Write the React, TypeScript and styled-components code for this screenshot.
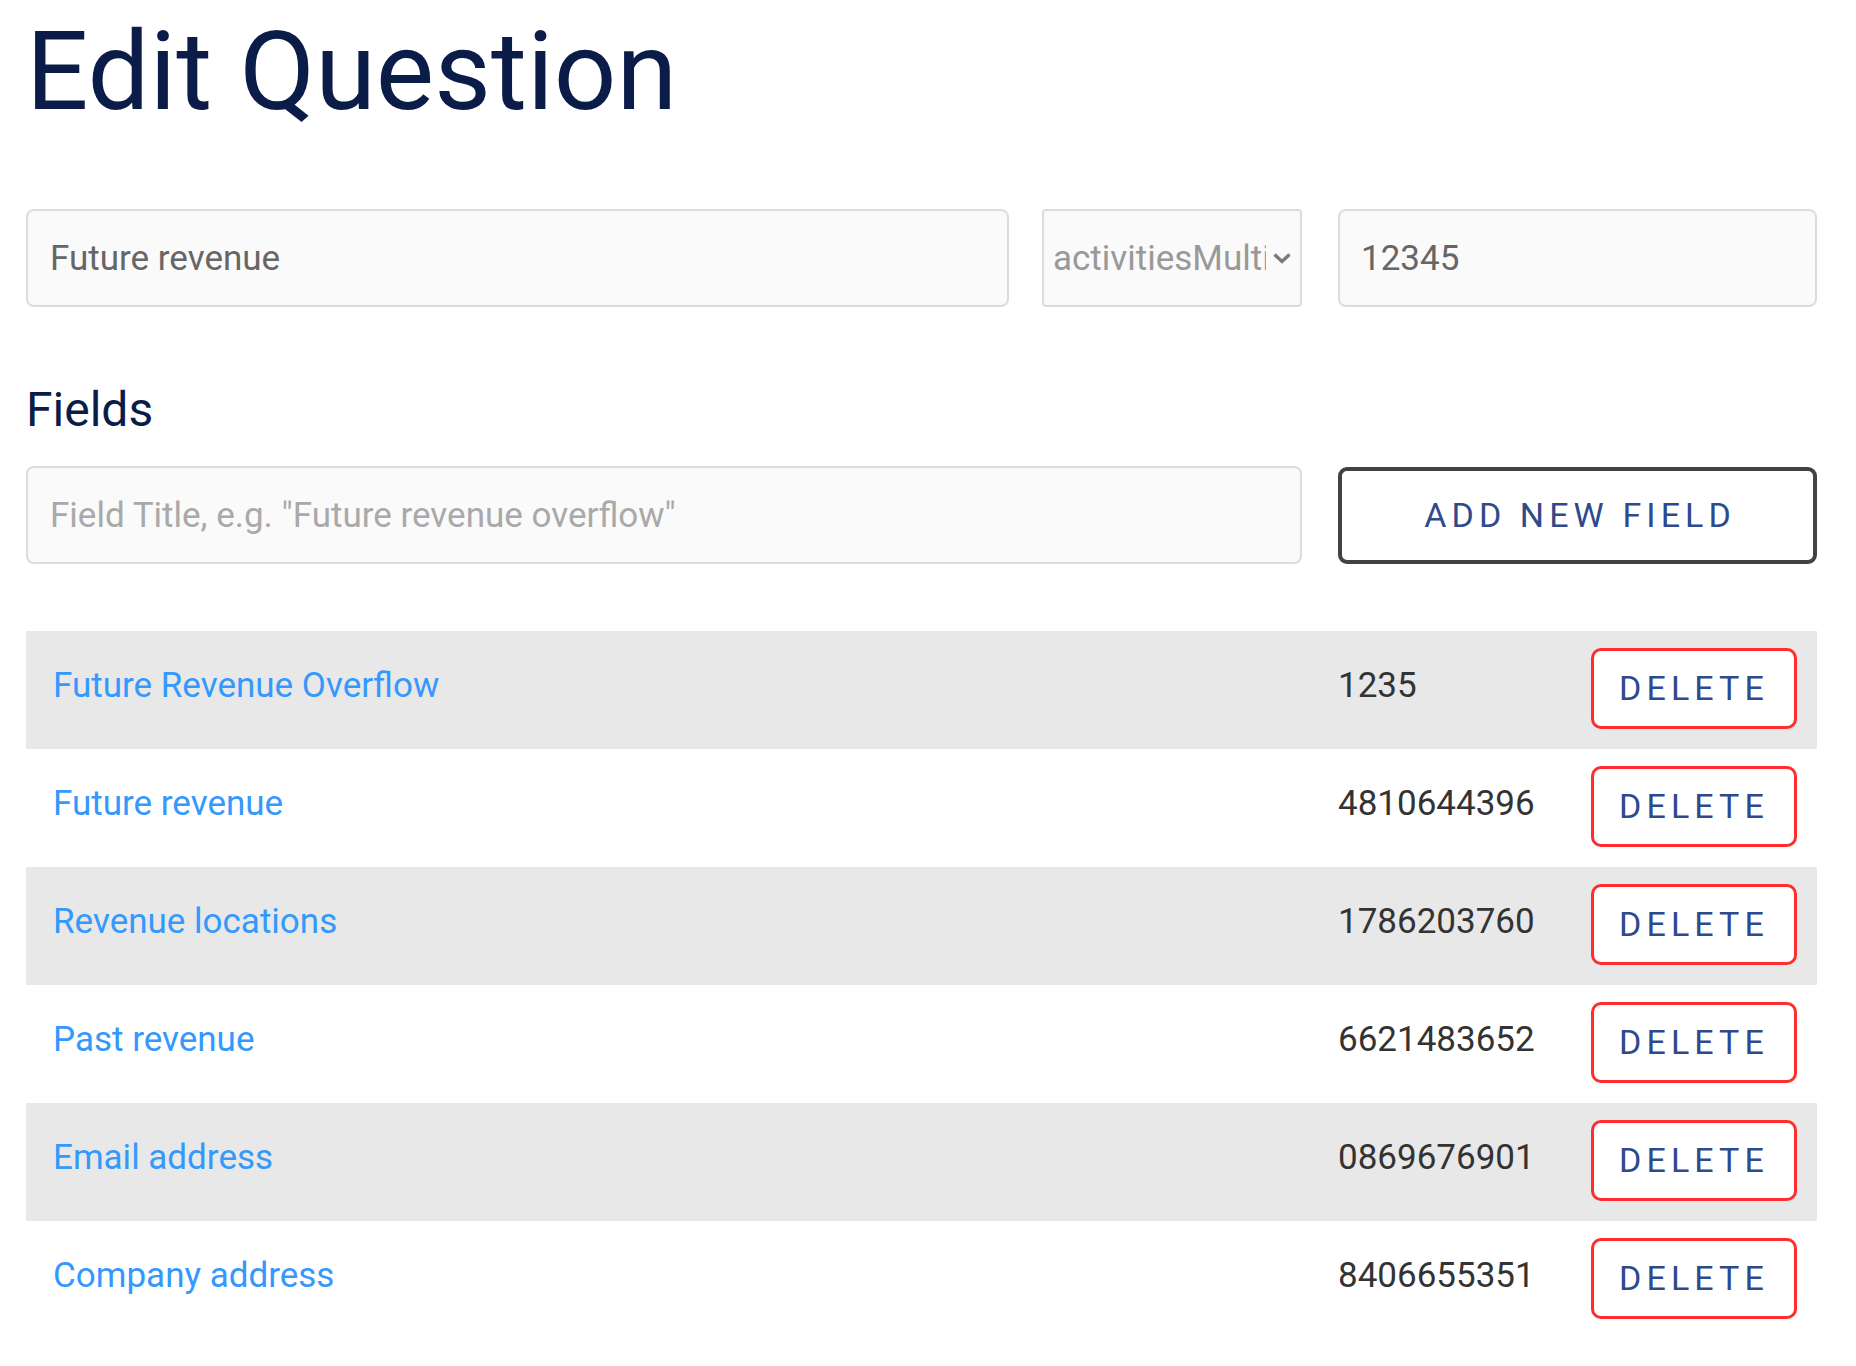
import React from 'react';
import styled, { createGlobalStyle } from 'styled-components';

const GlobalStyle = createGlobalStyle`
  body {
    margin: 0;
    background: #ffffff;
    font-family: Roboto, "Liberation Sans", sans-serif;
  }
  * {
    box-sizing: border-box;
  }
`;

const Page = styled.div`
  padding: 17px 39px 40px 26px;
`;

const Title = styled.h1`
  margin: 0;
  font-size: 110px;
  line-height: 1;
  font-weight: 400;
  color: #0b1c48;
`;

const QuestionRow = styled.div`
  display: flex;
  margin-top: 82px;
`;

const TextInput = styled.input`
  flex: 1;
  width: 100%;
  min-width: 0;
  height: 98px;
  padding: 0 22px;
  border: 2px solid #dcdcdc;
  border-radius: 8px;
  background: #fafafa;
  font-family: inherit;
  font-size: 35px;
  color: #666;
  outline: none;

  &::placeholder {
    color: #a9a9a9;
  }
`;

const IdInput = styled(TextInput)`
  flex: 0 0 479px;
  padding: 0 21px;
`;

const SelectWrap = styled.div`
  position: relative;
  flex: 0 0 260px;
  margin: 0 36px 0 33px;
`;

const Select = styled.select`
  width: 100%;
  height: 98px;
  padding: 0 34px 0 9px;
  border: 2px solid #dcdcdc;
  border-radius: 4px;
  background: #fafafa;
  font-family: inherit;
  font-size: 35px;
  color: #999;
  appearance: none;
  outline: none;
`;

const Chevron = styled.svg`
  position: absolute;
  right: 10px;
  top: 50%;
  width: 20px;
  height: 12px;
  transform: translateY(-50%);
  pointer-events: none;
`;

const SectionTitle = styled.h2`
  margin: 79px 0 0;
  font-size: 48px;
  line-height: 1;
  font-weight: 400;
  color: #0b1c48;
`;

const AddRow = styled.div`
  display: grid;
  grid-template-columns: 1fr 479px;
  column-gap: 36px;
  margin-top: 32px;
  align-items: center;
`;

const OutlineButton = styled.button<{ $tone: 'dark' | 'danger' }>`
  display: flex;
  align-items: center;
  justify-content: center;
  border: 3px solid ${(p) => (p.$tone === 'danger' ? '#ff2d2d' : '#424242')};
  border-radius: ${(p) => (p.$tone === 'danger' ? '10px' : '9px')};
  background: #ffffff;
  color: #2e4a8c;
  font-family: inherit;
  font-size: 34px;
  font-weight: 400;
  letter-spacing: 0.15em;
  text-transform: uppercase;
  padding: 0 0 0 0.15em;
  cursor: pointer;
`;

const AddButton = styled(OutlineButton)`
  height: 97px;
  width: 100%;
  border-width: 4px;
`;

const DeleteButton = styled(OutlineButton)`
  width: 206px;
  height: 81px;
  margin-top: -4px;
  padding: 0;
`;

const FieldList = styled.div`
  margin-top: 67px;
`;

const FieldRow = styled.div<{ $shaded: boolean }>`
  display: grid;
  grid-template-columns: 1fr 253px 206px;
  align-items: center;
  height: 118px;
  padding: 0 20px 0 27px;
  background: ${(p) => (p.$shaded ? '#e8e8e8' : '#ffffff')};
`;

const FieldLink = styled.a`
  font-size: 35px;
  color: #3598fb;
  text-decoration: none;
  margin-top: -9px;
`;

const FieldId = styled.span`
  font-size: 35px;
  color: #333;
  margin-top: -9px;
`;

const fields = [
  { title: 'Future Revenue Overflow', id: '1235' },
  { title: 'Future revenue', id: '4810644396' },
  { title: 'Revenue locations', id: '1786203760' },
  { title: 'Past revenue', id: '6621483652' },
  { title: 'Email address', id: '0869676901' },
  { title: 'Company address', id: '8406655351' },
];

export default function App() {
  return (
    <>
      <GlobalStyle />
      <Page>
        <Title>Edit Question</Title>

        <QuestionRow>
          <TextInput defaultValue="Future revenue" />
          <SelectWrap>
            <Select defaultValue="activitiesMultiSelect">
              <option value="activitiesMultiSelect">activitiesMultiSelect</option>
            </Select>
            <Chevron viewBox="0 0 20 12">
              <path d="M2.5 2.5 L10 9.5 L17.5 2.5" fill="none" stroke="#7a7a7a" strokeWidth="3.4" />
            </Chevron>
          </SelectWrap>
          <IdInput defaultValue="12345" />
        </QuestionRow>

        <SectionTitle>Fields</SectionTitle>

        <AddRow>
          <TextInput placeholder={'Field Title, e.g. "Future revenue overflow"'} />
          <AddButton $tone="dark">Add new field</AddButton>
        </AddRow>

        <FieldList>
          {fields.map((f, i) => (
            <FieldRow key={f.id} $shaded={i % 2 === 0}>
              <FieldLink href="#">{f.title}</FieldLink>
              <FieldId>{f.id}</FieldId>
              <DeleteButton $tone="danger">Delete</DeleteButton>
            </FieldRow>
          ))}
        </FieldList>
      </Page>
    </>
  );
}
